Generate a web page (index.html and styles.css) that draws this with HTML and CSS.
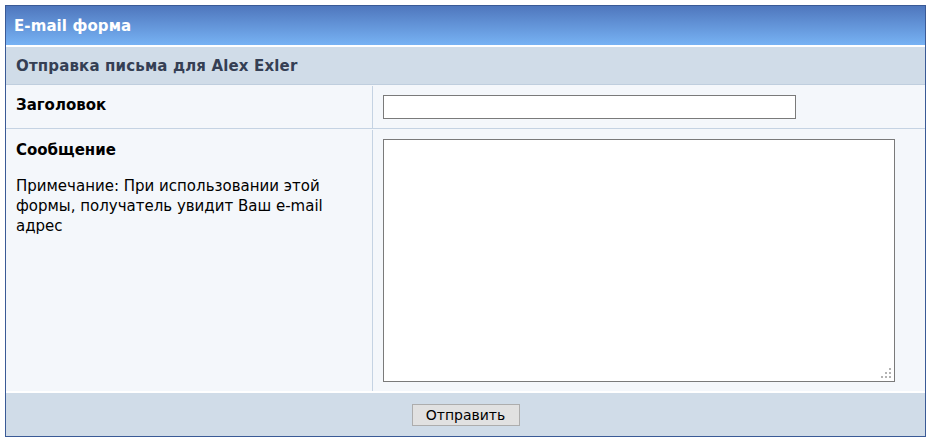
FILE: index.html
```html
<!DOCTYPE html>
<html lang="ru">
<head>
    <meta charset="UTF-8">
    <meta name="viewport" content="width=device-width, initial-scale=1.0">
    <title>E-mail форма</title>
    <link rel="stylesheet" href="styles.css">
</head>
<body>
    <form class="mail-box" id="mail-form">
        <div class="mail-title">E-mail форма</div>
        <div class="mail-subtitle">Отправка письма для Alex Exler</div>

        <div class="mail-row row-subject">
            <div class="label-cell"><b>Заголовок</b></div>
            <div class="field-cell">
                <input type="text" class="subject-input" name="subject">
            </div>
        </div>

        <div class="mail-row row-message">
            <div class="label-cell">
                <b>Сообщение</b>
                <p class="note">Примечание: При использовании этой формы, получатель увидит Ваш e-mail адрес</p>
            </div>
            <div class="field-cell">
                <span class="textarea-wrap">
                    <textarea class="message-input" name="message"></textarea>
                    <svg class="grip" width="10" height="10" viewBox="0 0 10 10">
                        <rect x="8" y="0" width="2" height="2"/>
                        <rect x="4" y="4" width="2" height="2"/>
                        <rect x="8" y="4" width="2" height="2"/>
                        <rect x="0" y="8" width="2" height="2"/>
                        <rect x="4" y="8" width="2" height="2"/>
                        <rect x="8" y="8" width="2" height="2"/>
                    </svg>
                </span>
            </div>
        </div>

        <div class="mail-footer">
            <button type="submit" class="send-btn">Отправить</button>
        </div>
    </form>
</body>
</html>
```

FILE: styles.css
```css
body {
    margin: 0;
    padding: 5px;
    background-color: #fff;
    font-family: "DejaVu Sans", Verdana, sans-serif;
    font-size: 15px;
    color: #000;
}
.mail-box {
    width: 919px;
    margin: 0;
    border: 1px solid #3a5a96;
    background-color: #fff;
}
.mail-title {
    height: 39px;
    line-height: 40px;
    padding-left: 8px;
    color: #fff;
    font-weight: bold;
    letter-spacing: 0.1px;
    background: linear-gradient(to bottom, #4f77bd, #77b2f4);
    border-bottom: 2px solid #fff;
}
.mail-subtitle {
    height: 37px;
    line-height: 38px;
    padding-left: 10px;
    color: #353f54;
    font-weight: bold;
    letter-spacing: 0.15px;
    background-color: #d0dce8;
    border-bottom: 1px solid #bfcede;
}
.mail-row {
    display: flex;
    background-color: #f4f7fb;
    border-top: 1px solid #f4f7fb;
}
.row-subject {
    border-bottom: 1px solid #c5d3e3;
}
.label-cell {
    width: 346px;
    padding: 11px 10px 10px;
    border-right: 1px solid #c5d3e3;
}
.row-subject .label-cell {
    padding-top: 10px;
}
.field-cell {
    flex: 1;
    padding: 9px 10px;
}
.row-message .field-cell {
    padding-bottom: 9px;
}
.note {
    margin: 17px 0 0;
    line-height: 20px;
    font-size: 15px;
}
.subject-input {
    display: block;
    box-sizing: border-box;
    width: 413px;
    height: 24px;
    margin: 0;
    border: 1px solid #7a7a7a;
    background: #fff;
}
.textarea-wrap {
    position: relative;
    display: block;
    width: 512px;
    height: 243px;
}
.message-input {
    display: block;
    box-sizing: border-box;
    width: 512px;
    height: 243px;
    margin: 0;
    border: 1px solid #7a7a7a;
    background: #fff;
    resize: none;
}
.grip {
    position: absolute;
    right: 4px;
    bottom: 4px;
    fill: #b3b3b3;
}
.mail-footer {
    height: 43px;
    border-top: 2px solid #fff;
    background-color: #d0dce8;
    display: flex;
    justify-content: center;
    align-items: flex-start;
}
.send-btn {
    margin-top: 11px;
    width: 108px;
    height: 22px;
    padding: 0;
    font-family: "DejaVu Sans", Verdana, sans-serif;
    font-size: 14px;
    color: #000;
    background-color: #e1e1e1;
    border: 1px solid #adadad;
    border-radius: 0;
}
```
